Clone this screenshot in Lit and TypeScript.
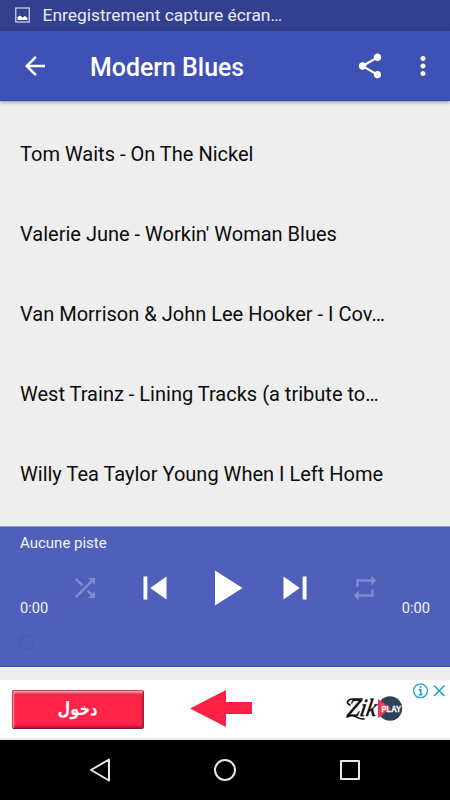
import { LitElement, html, css, svg } from "lit";
import { customElement, property } from "lit/decorators.js";

const PATHS: Record<string, string> = {
  back: "M20 11H7.83l5.59-5.59L12 4l-8 8 8 8 1.41-1.41L7.83 13H20v-2z",
  share:
    "M18 16.08c-.76 0-1.44.3-1.96.77L8.91 12.7c.05-.23.09-.46.09-.7s-.04-.47-.09-.7l7.05-4.11c.54.5 1.25.81 2.04.81 1.66 0 3-1.34 3-3s-1.34-3-3-3-3 1.34-3 3c0 .24.04.47.09.7L8.04 9.81C7.5 9.31 6.79 9 6 9c-1.66 0-3 1.34-3 3s1.34 3 3 3c.79 0 1.5-.31 2.04-.81l7.12 4.16c-.05.21-.08.43-.08.65 0 1.61 1.31 2.92 2.92 2.92 1.61 0 2.92-1.31 2.92-2.92s-1.31-2.92-2.92-2.92z",
  more:
    "M12 8c1.1 0 2-.9 2-2s-.9-2-2-2-2 .9-2 2 .9 2 2 2zm0 2c-1.1 0-2 .9-2 2s.9 2 2 2 2-.9 2-2-.9-2-2-2zm0 6c-1.1 0-2 .9-2 2s.9 2 2 2 2-.9 2-2-.9-2-2-2z",
  shuffle:
    "M10.59 9.17L5.41 4 4 5.41l5.17 5.17 1.42-1.41zM14.5 4l2.04 2.04L4 18.59 5.41 20 17.96 7.46 20 9.5V4h-5.5zm.33 9.41l-1.41 1.41 3.13 3.13L14.5 20H20v-5.5l-2.04 2.04-3.13-3.13z",
  previous: "M6 6h2v12H6zm3.5 6l8.5 6V6z",
  play: "M8 5v14l11-7z",
  next: "M6 18l8.5-6L6 6v12zM16 6v12h2V6h-2z",
  repeat: "M7 7h10v3l4-4-4-4v3H5v6h2V7zm10 10H7v-3l-4 4 4 4v-3h12v-6h-2v4z",
};

@customElement("md-icon")
export class MdIcon extends LitElement {
  @property() name = "";

  static styles = css`
    :host { display: block; width: 30px; height: 30px; flex: none; }
    svg { display: block; width: 100%; height: 100%; fill: currentColor; }
  `;

  render() {
    return html`<svg viewBox="0 0 24 24">${svg`<path d=${PATHS[this.name] ?? ""}></path>`}</svg>`;
  }
}

@customElement("player-bar")
export class PlayerBar extends LitElement {
  static styles = css`
    :host {
      display: flex; flex-direction: column; box-sizing: border-box;
      height: 141px; padding: 7px 20px 0; color: #fff; background: #5060ba;
      border-top: 1px solid #8c95cc; border-bottom: 1px solid #3d50b6;
      font-size: 15px; line-height: 18px;
    }
    .track { height: 18px; color: #f2f3fa; }
    .controls {
      display: grid; grid-template-columns: 30px repeat(5, 70px) 30px;
      height: 60px; margin-top: 5.5px; align-items: center; justify-items: center;
    }
    .time { align-self: end; justify-self: start; color: #f2f3fa; font-size: 14.6px; margin-bottom: 1px; }
    .end { justify-self: end; }
    .dim { color: #7f8bcd; }
    .skip { width: 46px; height: 46px; }
    .play { width: 60px; height: 60px; }
    .seek { display: flex; align-items: center; height: 16px; margin-top: 16.5px; margin-left: -1px; }
    .thumb { width: 11px; height: 11px; border: 2px solid #4b5bb5; border-radius: 50%; }
    .rail { flex: 1; height: 1px; background: #4d5db6; margin-right: 5px; }
  `;

  render() {
    return html`
      <div class="track">Aucune piste</div>
      <div class="controls">
        <span class="time">0:00</span>
        <md-icon class="dim" name="shuffle"></md-icon>
        <md-icon class="skip" name="previous"></md-icon>
        <md-icon class="play" name="play"></md-icon>
        <md-icon class="skip" name="next"></md-icon>
        <md-icon class="dim" name="repeat"></md-icon>
        <span class="time end">0:00</span>
      </div>
      <div class="seek"><div class="thumb"></div><div class="rail"></div></div>
    `;
  }
}

@customElement("ad-banner")
export class AdBanner extends LitElement {
  static styles = css`
    :host {
      display: flex; box-sizing: border-box; height: 60px; background: #fff;
      border-bottom: 2px solid #ececec; padding-left: 12px;
    }
    .enter {
      box-sizing: border-box; width: 132px; height: 39px; margin-top: 10px;
      display: flex; align-items: center; justify-content: center;
      background: #ff2348; border: 1px solid; border-radius: 2px;
      border-color: #c2465f #98203a #8b1430 #c2465f;
      box-shadow: inset 1px 2px 2px #f599a8, inset -1px -2px 2px #b8183a;
    }
    .label { width: 46px; height: 30px; overflow: visible; fill: #fff; font: bold 18px "DejaVu Sans", sans-serif; }
    .arrow { width: 62px; height: 37px; margin: 10px 0 0 46px; fill: #ff2046; }
    .brand { width: 60px; height: 36px; margin: 10px 0 0 92px; overflow: visible; }
    .zik { font: italic 25px "Liberation Serif", serif; fill: #080808; stroke: #080808; stroke-width: 0.5; }
    .playword { font: bold 9.5px "Liberation Sans", sans-serif; fill: #fff; stroke: #fff; stroke-width: 0.3; }
    .choices { width: 36px; height: 18px; margin: 2px 0 0 8px; fill: none; stroke: #18a6c9; }
  `;

  render() {
    return html`
      <div class="enter">
        <svg class="label" viewBox="0 0 46 30" lang="ar">
          <text x="2.5" y="20" textLength="40" lengthAdjust="spacingAndGlyphs">دخول</text>
        </svg>
      </div>
      <svg class="arrow" viewBox="0 0 62 37"><path d="M0 18.5L36 0V12H62V24H36V37Z"></path></svg>
      <svg class="brand" viewBox="0 0 60 36">
        <circle cx="46" cy="18.5" r="12.2" fill="#2d4158"></circle>
        <path d="M34 10Q34 9 35 9.5L47 18.5L35 27.5Q34 28 34 27Z" fill="#f53650"></path>
        <text class="zik" x="7" y="26" transform="skewX(-10)" textLength="29" lengthAdjust="spacingAndGlyphs">Zik</text>
        <path d="M6 15C1 13 4 9 9 9H18M3 27C10 22 13 30 20 29" fill="none" stroke="#080808" stroke-width="1.6" stroke-linecap="round"></path>
        <text class="playword" x="37.5" y="22" textLength="19.5" lengthAdjust="spacingAndGlyphs">PLAY</text>
      </svg>
      <svg class="choices" viewBox="0 0 36 18">
        <circle cx="8.5" cy="8.8" r="6.9" stroke-width="1.3"></circle>
        <path d="M8.5 4.2V6M6.8 7.9H8.7V12.6M6.6 12.8H10.6" stroke-width="1.6"></path>
        <path d="M22 3.5L32.5 14M32.5 3.5L22 14" stroke-width="1.6"></path>
      </svg>
    `;
  }
}

@customElement("app-root")
export class AppRoot extends LitElement {
  private tracks = [
    "Tom Waits - On The Nickel",
    "Valerie June - Workin' Woman Blues",
    "Van Morrison & John Lee Hooker - I Cov…",
    "West Trainz - Lining Tracks (a tribute to…",
    "Willy Tea Taylor Young When I Left Home",
  ];

  static styles = css`
    :host {
      display: flex; flex-direction: column; width: 450px; height: 800px;
      overflow: hidden; background: #eee; font-family: Roboto, sans-serif;
    }
    .status {
      display: flex; align-items: center; box-sizing: border-box; height: 31px;
      padding: 0 0 1px 15px; gap: 12.5px; background: #334090; color: #e9ebf5;
      font-size: 17.4px; line-height: 24px; flex: none;
    }
    .picture { width: 15px; height: 16px; }
    .toolbar {
      display: flex; align-items: center; box-sizing: border-box; height: 70px; flex: none;
      padding: 0 12.5px 0 20px; background: #3f51b5; color: #fff;
      border-bottom: 1px solid #2f45b5; box-shadow: 0 1px 4px rgba(0, 0, 0, 0.42);
    }
    .title { flex: 1; margin-left: 40px; font-size: 24.9px; line-height: 32px; font-weight: 500; padding-top: 5px; }
    .toolbar md-icon { margin-top: 1px; }
    .toolbar .more { margin-left: 22.5px; }
    .list { flex: 1; padding-top: 13px; }
    .track { height: 80px; line-height: 80px; padding-left: 20px; font-size: 20.03px; color: #0c0c0c; white-space: nowrap; }
    player-bar { flex: none; }
    ad-banner { flex: none; margin-top: 13px; }
    .nav {
      display: flex; align-items: center; justify-content: center; gap: 95px;
      height: 60px; flex: none; background: #000;
    }
    .nav svg { width: 30px; height: 30px; fill: none; stroke: #e8e8e8; stroke-width: 2; stroke-linejoin: round; }
  `;

  render() {
    return html`
      <div class="status">
        <svg class="picture" viewBox="0 0 15 16">
          <rect x=".75" y="1" width="13.5" height="14" fill="none" stroke="#c9cde3" stroke-width="1.3"></rect>
          <path d="M2.5 13V10L5 8.5L7.5 10.5L10 9L12.5 11V13Z" fill="#fff"></path>
        </svg>
        <span>Enregistrement capture écran…</span>
      </div>
      <div class="toolbar">
        <md-icon name="back"></md-icon>
        <div class="title">Modern Blues</div>
        <md-icon name="share"></md-icon>
        <md-icon class="more" name="more"></md-icon>
      </div>
      <div class="list">${this.tracks.map((t) => html`<div class="track">${t}</div>`)}</div>
      <player-bar></player-bar>
      <ad-banner></ad-banner>
      <div class="nav">
        <svg viewBox="0 0 30 30"><path d="M6 15L24 4.5V25.5Z"></path></svg>
        <svg viewBox="0 0 30 30"><circle cx="15" cy="15" r="10"></circle></svg>
        <svg viewBox="0 0 30 30"><rect x="6" y="6" width="18" height="18"></rect></svg>
      </div>
    `;
  }
}
